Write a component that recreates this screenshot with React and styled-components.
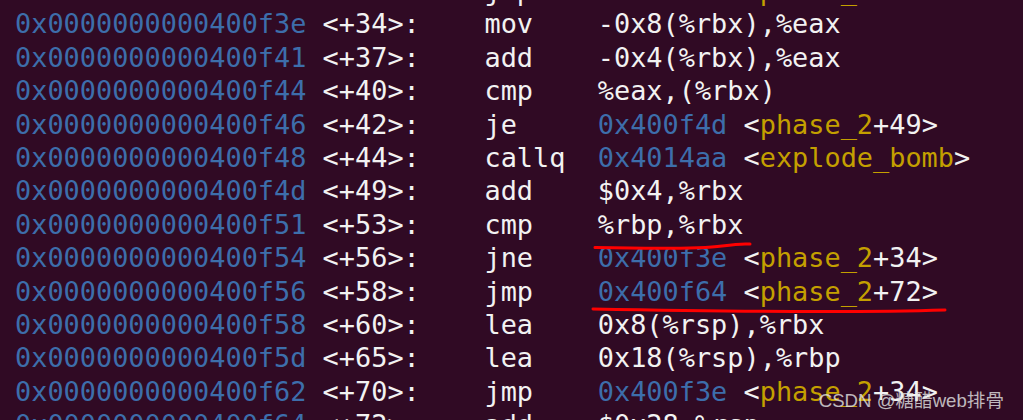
import React from "react";
import styled, { createGlobalStyle } from "styled-components";

const GlobalStyle = createGlobalStyle`
  html, body {
    margin: 0;
    padding: 0;
    background: #300a24;
  }
`;

const Screen = styled.div`
  position: relative;
  width: 1023px;
  height: 420px;
  overflow: hidden;
  background: #300a24;
  font-family: "DejaVu Sans Mono", monospace;
  font-size: 26.9px;
  line-height: 33.4px;
  color: #f2f2f2;
`;

const Lines = styled.div`
  margin-top: -26px;
  padding-left: 15px;
`;

const Line = styled.div`
  display: grid;
  grid-template-columns: 19ch 10ch 7ch 1fr;
  white-space: pre;
  height: 33.4px;
`;

const Addr = styled.span`
  color: #3d6eab;
`;

const Plain = styled.span`
  color: #f2f2f2;
`;

const Sym = styled.span`
  color: #c4a000;
`;

const Watermark = styled.div`
  position: absolute;
  right: 19px;
  bottom: 7px;
  font-family: "Liberation Sans", "Noto Sans CJK SC", sans-serif;
  font-size: 18.6px;
  line-height: 24px;
  color: rgba(225, 225, 225, 0.82);
  white-space: nowrap;
`;

const Marks = styled.svg`
  position: absolute;
  left: 0;
  top: 0;
  pointer-events: none;
`;

const rows = [
  ["400f3c", "+32", "jmp", { to: "0x400f58", sym: "phase_2", plus: "+60" }],
  ["400f3e", "+34", "mov", "-0x8(%rbx),%eax"],
  ["400f41", "+37", "add", "-0x4(%rbx),%eax"],
  ["400f44", "+40", "cmp", "%eax,(%rbx)"],
  ["400f46", "+42", "je", { to: "0x400f4d", sym: "phase_2", plus: "+49" }],
  ["400f48", "+44", "callq", { to: "0x4014aa", sym: "explode_bomb", plus: "" }],
  ["400f4d", "+49", "add", "$0x4,%rbx"],
  ["400f51", "+53", "cmp", "%rbp,%rbx"],
  ["400f54", "+56", "jne", { to: "0x400f3e", sym: "phase_2", plus: "+34" }],
  ["400f56", "+58", "jmp", { to: "0x400f64", sym: "phase_2", plus: "+72" }],
  ["400f58", "+60", "lea", "0x8(%rsp),%rbx"],
  ["400f5d", "+65", "lea", "0x18(%rsp),%rbp"],
  ["400f62", "+70", "jmp", { to: "0x400f3e", sym: "phase_2", plus: "+34" }],
  ["400f64", "+72", "add", "$0x28,%rsp"],
];

function Operand({ arg }) {
  if (typeof arg === "string") return <Plain>{arg}</Plain>;
  return (
    <span>
      <Addr>{arg.to}</Addr>
      <Plain> &lt;</Plain>
      <Sym>{arg.sym}</Sym>
      <Plain>{arg.plus}&gt;</Plain>
    </span>
  );
}

export default function App() {
  return (
    <>
      <GlobalStyle />
      <Screen>
        <Lines>
          {rows.map(([addr, off, op, arg]) => (
            <Line key={addr}>
              <Addr>0x0000000000{addr}</Addr>
              <Plain>&lt;{off}&gt;:</Plain>
              <Plain>{op}</Plain>
              <Operand arg={arg} />
            </Line>
          ))}
        </Lines>
        <Marks width="1023" height="420" viewBox="0 0 1023 420">
          <path
            d="M595 247.5 C640 248.5 700 249 722 246 S745 244 750 244"
            fill="none"
            stroke="#ff0000"
            strokeWidth="3"
            strokeLinecap="round"
          />
          <path
            d="M593 309 C700 311 850 313 945 310"
            fill="none"
            stroke="#ff0000"
            strokeWidth="3"
            strokeLinecap="round"
          />
        </Marks>
        <Watermark>CSDN @糖醋web排骨</Watermark>
      </Screen>
    </>
  );
}
